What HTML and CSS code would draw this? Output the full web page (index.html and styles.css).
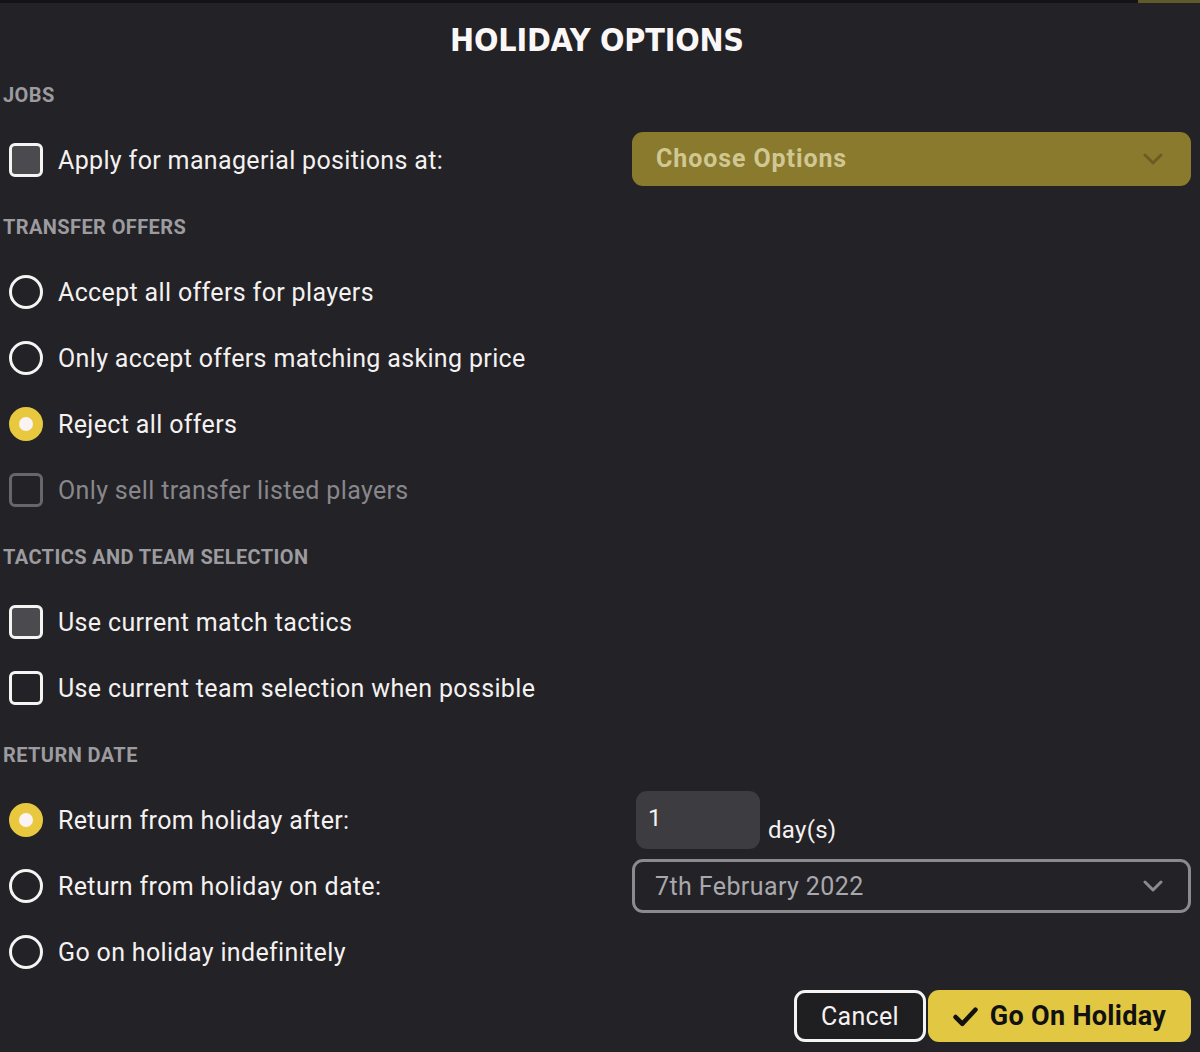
FILE: index.html
```html
<!DOCTYPE html>
<html lang="en">
<head>
<meta charset="utf-8">
<title>Holiday Options</title>
<link rel="stylesheet" href="styles.css">
</head>
<body>
<div class="page">
  <div class="topbar"><div class="topbar-accent"></div></div>
  <h1 class="title">HOLIDAY OPTIONS</h1>

  <div class="section first">JOBS</div>
  <div class="row">
    <div class="opt"><span class="box filled"></span><span class="label">Apply for managerial positions at:</span></div>
    <div class="ctrl">
      <div class="select gold"><span>Choose Options</span>
        <svg class="chev" viewBox="0 0 20 12" width="20" height="12"><path d="M2 2 L10 10 L18 2" fill="none" stroke="currentColor" stroke-width="3" stroke-linecap="round" stroke-linejoin="round"/></svg>
      </div>
    </div>
  </div>

  <div class="section">TRANSFER OFFERS</div>
  <div class="row"><div class="opt"><span class="radio"></span><span class="label">Accept all offers for players</span></div></div>
  <div class="row"><div class="opt"><span class="radio"></span><span class="label">Only accept offers matching asking price</span></div></div>
  <div class="row"><div class="opt"><span class="radio on"></span><span class="label">Reject all offers</span></div></div>
  <div class="row"><div class="opt disabled"><span class="box"></span><span class="label">Only sell transfer listed players</span></div></div>

  <div class="section">TACTICS AND TEAM SELECTION</div>
  <div class="row"><div class="opt"><span class="box filled"></span><span class="label">Use current match tactics</span></div></div>
  <div class="row"><div class="opt"><span class="box"></span><span class="label">Use current team selection when possible</span></div></div>

  <div class="section">RETURN DATE</div>
  <div class="row">
    <div class="opt"><span class="radio on"></span><span class="label">Return from holiday after:</span></div>
    <div class="ctrl days">
      <div class="num">1</div><span class="unit">day(s)</span>
    </div>
  </div>
  <div class="row">
    <div class="opt"><span class="radio"></span><span class="label">Return from holiday on date:</span></div>
    <div class="ctrl">
      <div class="select outline"><span>7th February 2022</span>
        <svg class="chev" viewBox="0 0 20 12" width="20" height="12"><path d="M2 2 L10 10 L18 2" fill="none" stroke="currentColor" stroke-width="3" stroke-linecap="round" stroke-linejoin="round"/></svg>
      </div>
    </div>
  </div>
  <div class="row"><div class="opt"><span class="radio"></span><span class="label">Go on holiday indefinitely</span></div></div>

  <div class="footer">
    <button class="btn cancel">Cancel</button>
    <button class="btn go">
      <svg class="tick" viewBox="0 0 24 20" width="25" height="21"><path d="M2.5 10.5 L9 17 L21.5 3.5" fill="none" stroke="#111" stroke-width="4.4" stroke-linecap="round" stroke-linejoin="round"/></svg>
      <span>Go On Holiday</span>
    </button>
  </div>
</div>
</body>
</html>
```
FILE: styles.css
```css
* { box-sizing: border-box; }
html, body { margin: 0; padding: 0; }
body {
  background: #232226;
  color: #f4f1f1;
  font-family: Roboto, "Liberation Sans", sans-serif;
  width: 1200px;
  height: 1052px;
  overflow: hidden;
}
.page { display: flex; flex-direction: column; }
.topbar {
  height: 3px;
  background: #141316;
  display: flex;
  justify-content: flex-end;
}
.topbar-accent { width: 62px; background: #5e5a2c; }
.title {
  margin: 0;
  height: 74px;
  line-height: 74px;
  text-align: center;
  font-family: "DejaVu Sans Condensed", "DejaVu Sans", sans-serif;
  font-stretch: condensed;
  font-weight: 700;
  font-size: 32px;
  color: #fbf7f7;
  letter-spacing: -0.2px;
  padding-right: 6px;
}
.section {
  padding: 16px 0 14px 3px;
  line-height: 36px;
  height: 66px;
  font-family: Roboto, "Liberation Sans", sans-serif;
  font-weight: 700;
  font-size: 20px;
  letter-spacing: 0.4px;
  color: #9c9b9f;
}
.section.first { padding-top: 0; height: 50px; }
.row {
  height: 66px;
  display: flex;
  align-items: center;
  padding-left: 9px;
}
.opt {
  width: 623px;
  display: flex;
  align-items: center;
  gap: 15px;
}
.label {
  font-size: 25px;
  letter-spacing: 0.35px;
  color: #f4f1f1;
}
.opt.disabled .label { color: #88878b; }
.box {
  width: 34px;
  height: 34px;
  border: 3px solid #f6f3f3;
  border-radius: 6px;
  background: #232226;
  flex: none;
}
.box.filled { background: #4b4a4e; }
.opt.disabled .box { border-color: #67666a; }
.radio {
  width: 34px;
  height: 34px;
  border: 3px solid #f6f3f3;
  border-radius: 50%;
  flex: none;
  display: flex;
  align-items: center;
  justify-content: center;
}
.radio.on { background: #e8c83f; border-color: #e8c83f; }
.radio.on::after {
  content: "";
  width: 14px;
  height: 14px;
  border-radius: 50%;
  background: #fbf3f3;
}
.ctrl { width: 559px; }
.select {
  height: 54px;
  border-radius: 11px;
  display: flex;
  align-items: center;
  justify-content: space-between;
  padding: 0 28px 0 24px;
  font-size: 25px;
  letter-spacing: 0.4px;
}
.select.gold {
  background: #8a7a2d;
  color: #d0c793;
  font-weight: 700;
  letter-spacing: 0.9px;
  margin-top: -3px;
}
.select.gold .chev { color: #6a5d23; }
.select.outline {
  border: 3px solid #8b8a8e;
  color: #a9a8ac;
  padding-left: 20px;
  padding-right: 25px;
}
.select.outline .chev { color: #8b8a8e; }
.days {
  display: flex;
  align-items: flex-end;
  gap: 8px;
  padding-left: 4px;
}
.num {
  width: 124px;
  height: 58px;
  border-radius: 11px;
  background: #3d3c40;
  color: #f4f1f1;
  font-size: 24px;
  padding: 13px 0 0 12px;
}
.unit {
  font-size: 24px;
  letter-spacing: 0.3px;
  padding-bottom: 5px;
}
.footer {
  display: flex;
  justify-content: flex-end;
  gap: 2px;
  padding: 5px 9px 0 0;
}
.btn {
  height: 52px;
  border-radius: 11px;
  font-family: Roboto, "Liberation Sans", sans-serif;
  font-size: 25px;
  display: flex;
  align-items: center;
  justify-content: center;
  cursor: pointer;
}
.btn.cancel {
  width: 132px;
  background: #1f1e21;
  border: 3px solid #f6f3f3;
  color: #f4f1f1;
  letter-spacing: 0.3px;
}
.btn.go {
  width: 263px;
  background: #e2c742;
  border: none;
  color: #111013;
  font-weight: 700;
  gap: 12px;
  font-size: 27px;
  letter-spacing: 0.3px;
}
.tick { flex: none; }
```
